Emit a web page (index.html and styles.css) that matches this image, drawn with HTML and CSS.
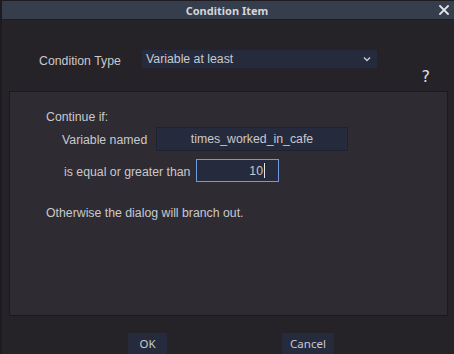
FILE: index.html
```html
<!DOCTYPE html>
<html>
<head>
<meta charset="utf-8">
<link rel="stylesheet" href="styles.css">
</head>
<body>
<div class="dialog">
  <div class="titlebar">
    <span class="title">Condition Item</span>
    <svg class="close" width="10" height="10" viewBox="0 0 10 10"><path d="M1 1 L9 9 M9 1 L1 9" stroke="#e6e6ea" stroke-width="1.8" stroke-linecap="square"/></svg>
  </div>
  <div class="type-row">
    <span class="type-label">Condition Type</span>
    <div class="dropdown">
      <span>Variable at least</span>
      <svg class="chev" width="8" height="6" viewBox="0 0 8 6"><path d="M1 1.5 L4 4.5 L7 1.5" fill="none" stroke="#c8c8d0" stroke-width="1.5"/></svg>
    </div>
  </div>
  <div class="help-row"><span class="help">?</span></div>
  <div class="panel">
    <div class="continue">Continue if:</div>
    <div class="field-row var-row">
      <span class="var-label">Variable named</span>
      <div class="input var-input">times_worked_in_cafe</div>
    </div>
    <div class="field-row num-row">
      <span class="num-label">is equal or greater than</span>
      <div class="input num-input focused">10<span class="caret"></span></div>
    </div>
    <div class="otherwise">Otherwise the dialog will branch out.</div>
  </div>
  <div class="footer">
    <button class="btn ok">OK</button>
    <button class="btn cancel">Cancel</button>
  </div>
</div>
</body>
</html>
```
FILE: styles.css
```css
html, body {
  margin: 0;
  padding: 0;
  background: #252328;
}
body {
  width: 454px;
  height: 354px;
  overflow: hidden;
  font-family: "Liberation Sans", Arial, sans-serif;
  font-size: 12.3px;
  color: #c9c9cd;
}
.dialog {
  display: flex;
  flex-direction: column;
  height: 354px;
  border-left: 2px solid #1d1b20;
  border-top: 1px solid #1d1b20;
  box-sizing: border-box;
}
.titlebar {
  height: 18px;
  background: #363d4d;
  border-bottom: 1px solid #1f1d22;
  display: flex;
  align-items: center;
  justify-content: center;
  position: relative;
}
.title {
  font-family: "Noto Sans", "DejaVu Sans", sans-serif;
  font-weight: bold;
  font-size: 11px;
  color: #d4d5d9;
  margin-left: -2px;
}
.close {
  position: absolute;
  right: 5px;
  top: 4px;
}
.type-row {
  display: flex;
  align-items: center;
  margin-top: 30px;
  padding-left: 37px;
  height: 18px;
}
.type-label {
  width: 103px;
  padding-top: 4px;
  white-space: nowrap;
}
.dropdown {
  width: 235px;
  height: 18px;
  background: #252b3c;
  display: flex;
  align-items: center;
  justify-content: space-between;
  padding: 0 5px 0 4px;
  box-sizing: border-box;
}
.chev {
  margin-right: 1px;
}
.help-row {
  height: 23px;
  display: flex;
  justify-content: flex-end;
  padding-right: 24px;
}
.help {
  font-family: "DejaVu Sans", sans-serif;
  font-size: 16px;
  color: #e0e0e4;
  line-height: 18px;
  margin-top: 0px;
}
.panel {
  margin: 0 6px 0 7px;
  height: 225px;
  box-sizing: border-box;
  background: #2e2b32;
  border: 1px solid #1b191e;
  padding: 16px 0 0 36px;
}
.continue {
  height: 18px;
  line-height: 18px;
}
.field-row {
  display: flex;
  align-items: center;
}
.var-row {
  margin-top: 1px;
  padding-left: 16px;
  height: 24px;
}
.var-label {
  width: 94px;
  padding-top: 2px;
  white-space: nowrap;
}
.input {
  background: #252b3c;
  box-sizing: border-box;
  display: flex;
  align-items: center;
}
.var-input {
  width: 192px;
  height: 24px;
  justify-content: center;
  border: 1px solid #1e2230;
}
.num-row {
  margin-top: 8px;
  padding-left: 18px;
  height: 23px;
}
.num-label {
  width: 132px;
  white-space: nowrap;
  padding-top: 2px;
}
.num-input {
  width: 83px;
  height: 23px;
  justify-content: flex-end;
  border: 1px solid #6d9be0;
  padding-right: 13px;
}
.caret {
  display: inline-block;
  width: 1px;
  height: 15px;
  background: #e6e6ea;
  margin-left: 1px;
}
.otherwise {
  margin-top: 24px;
  white-space: nowrap;
}
.footer {
  flex: 1;
  display: flex;
  align-items: flex-end;
}
.btn {
  font-family: "Noto Sans", "DejaVu Sans", sans-serif;
  font-size: 11.5px;
  color: #c9c9cd;
  background: #252b3c;
  border: none;
  height: 21px;
  padding: 0;
  margin: 0;
}
.ok {
  width: 39px;
  margin-left: 126px;
}
.cancel {
  width: 52px;
  margin-left: 115px;
}
```
